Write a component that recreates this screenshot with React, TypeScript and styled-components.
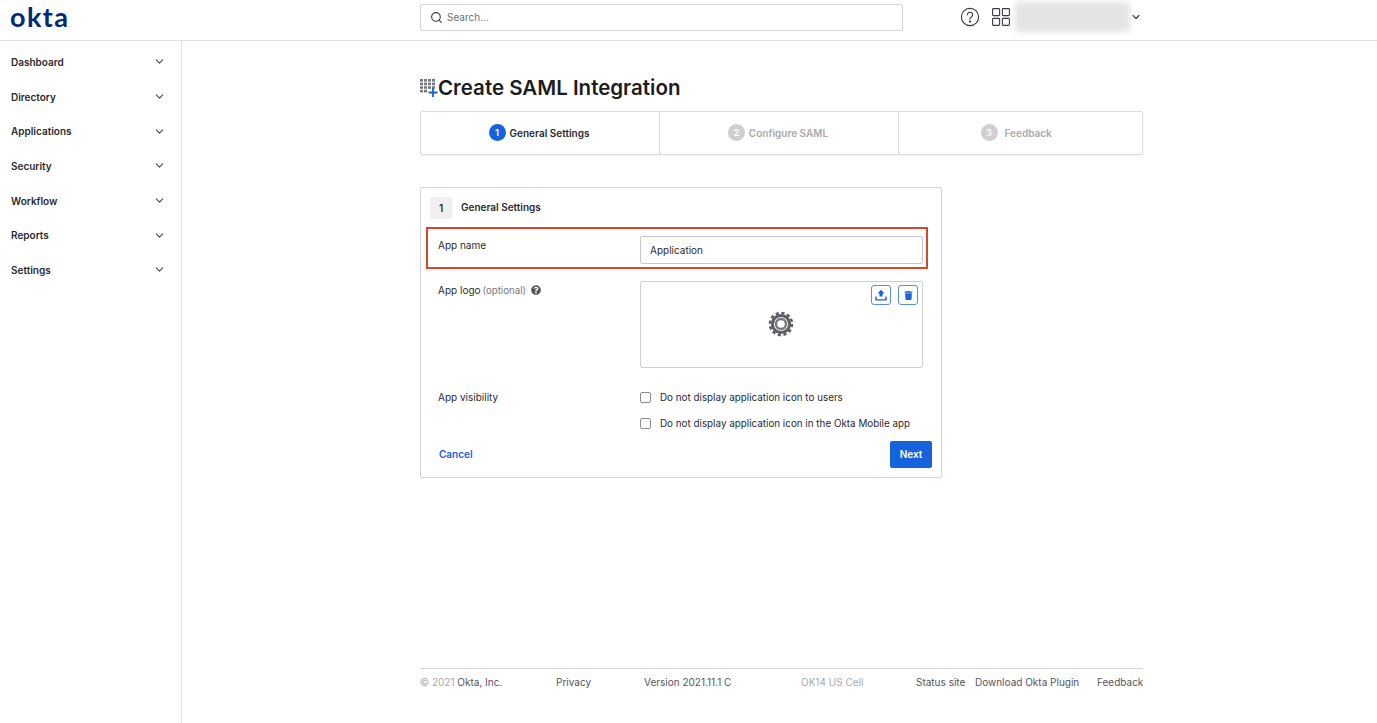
import React from 'react';
import styled, { createGlobalStyle } from 'styled-components';
import { ChevronDown, Search } from 'lucide-react';
import { FaQuestionCircle, FaTrash } from 'react-icons/fa';

const GlobalStyle = createGlobalStyle`
  html, body {
    margin: 0;
    padding: 0;
    background: #fff;
    color: #2b2b2e;
    font-family: Inter, "Liberation Sans", sans-serif;
    font-size: 10px;
  }
  * { box-sizing: border-box; }
`;

const Page = styled.div`
  width: 1377px;
  height: 723px;
  display: grid;
  grid-template-rows: 41px 1fr;
  grid-template-columns: 182px 1fr;
  overflow: hidden;
`;

const Header = styled.header`
  grid-column: 1 / 3;
  display: flex;
  align-items: center;
  padding-bottom: 6px;
  border-bottom: 1px solid #e1e1e1;
`;

const LogoCell = styled.div`
  width: 420px;
  padding-left: 10px;
`;

const Logo = styled.span`
  color: #00297a;
  font-family: Lato, sans-serif;
  font-size: 27px;
  font-weight: 700;
  letter-spacing: 1.4px;
  line-height: 36px;
`;

const SearchBox = styled.div`
  width: 483px;
  height: 27px;
  display: flex;
  align-items: center;
  gap: 4px;
  padding-left: 9px;
  border: 1px solid #d4d4d6;
  border-radius: 2px;
  color: #6e6e78;
`;

const HeaderTools = styled.div`
  display: flex;
  align-items: center;
  margin-left: 57px;
  gap: 12px;
`;

const UserBlur = styled.div`
  width: 115px;
  height: 30px;
  margin-left: -7px;
  background: #e4e4e4;
  filter: blur(3px);
`;

const UserCaret = styled.span`
  display: flex;
  margin-left: -12px;
`;

const Sidebar = styled.nav`
  border-right: 1px solid #e1e1e1;
  padding-top: 3.5px;
`;

const NavItem = styled.div`
  height: 34.7px;
  display: flex;
  align-items: center;
  justify-content: space-between;
  padding: 0 15px 0 11px;
  font-weight: 600;
  color: #2b2b2e;
`;

const Main = styled.main`
  display: flex;
  flex-direction: column;
  padding: 32px 234px 0 238px;
`;

const TitleRow = styled.div`
  display: flex;
  align-items: center;
  height: 30px;
`;

const Title = styled.h1`
  margin: 0;
  font-size: 20.5px;
  font-weight: 600;
  line-height: 30px;
  color: #1d1d21;
`;

const Wizard = styled.div`
  display: grid;
  grid-template-columns: 238px 239px 1fr;
  height: 44px;
  margin-top: 8px;
  border: 1px solid #dcdcdc;
  border-radius: 2px;
  box-shadow: 0 1px 1px rgba(0, 0, 0, 0.05);
`;

const Step = styled.div<{ $active?: boolean; $last?: boolean }>`
  display: flex;
  align-items: center;
  justify-content: center;
  gap: ${p => (p.$last ? 7 : 4)}px;
  padding: 0 ${p => (p.$last ? 9 : 2)}px 1px 0;
  font-weight: 600;
  color: ${p => (p.$active ? '#2b2b2e' : '#a9a9ae')};
  & + & {
    border-left: 1px solid #dcdcdc;
  }
`;

const StepDot = styled.span<{ $active?: boolean }>`
  width: 17px;
  height: 17px;
  border-radius: 50%;
  display: flex;
  align-items: center;
  justify-content: center;
  font-size: 9.5px;
  color: #fff;
  background: ${p => (p.$active ? '#1662dd' : '#cfcfd2')};
`;

const Card = styled.section`
  position: relative;
  width: 522px;
  height: 291px;
  margin-top: 32px;
  padding: 9px 9px 8px;
  border: 1px solid #d4d4d6;
  border-radius: 2px;
`;

const CardHead = styled.div`
  display: flex;
  align-items: center;
  gap: 9px;
  height: 22px;
  font-weight: 600;
`;

const HeadText = styled.span`
  margin-top: -2px;
`;

const StepBox = styled.span`
  width: 22px;
  height: 22px;
  display: flex;
  align-items: center;
  justify-content: center;
  background: #f0f0f1;
  border-radius: 2px;
`;

const Row = styled.div<{ $height: number }>`
  display: grid;
  grid-template-columns: 202px 283px;
  height: ${p => p.$height}px;
  padding-left: 8px;
`;

const Label = styled.div`
  display: flex;
  align-items: center;
  gap: 5px;
  height: 16px;
  color: #2b2b2e;
`;

const Muted = styled.span`
  color: #77777c;
  font-size: 9.7px;
  margin-left: -3px;
`;

const TextField = styled.div`
  height: 28px;
  display: flex;
  align-items: center;
  padding-left: 9px;
  border: 1px solid #c9c9cc;
  border-radius: 2px;
`;

const LogoBox = styled.div`
  position: relative;
  height: 87px;
  display: flex;
  align-items: center;
  justify-content: center;
  padding: 0 1px 2px 0;
  border: 1px solid #d0d0d3;
  border-radius: 2px;
`;

const LogoActions = styled.div`
  position: absolute;
  top: 3px;
  right: 4px;
  display: flex;
  gap: 7px;
`;

const IconButton = styled.span`
  width: 20px;
  height: 20px;
  display: flex;
  align-items: center;
  justify-content: center;
  border: 1px solid #5d8fdc;
  border-radius: 3px;
  color: #1662dd;
`;

const Checks = styled.div`
  display: flex;
  flex-direction: column;
  gap: 12px;
`;

const CheckRow = styled.label`
  display: flex;
  align-items: center;
  gap: 9px;
  height: 14px;
  font-size: 9.85px;
  white-space: nowrap;
`;

const CheckBox = styled.span`
  flex: 0 0 11px;
  height: 11px;
  border: 1px solid #8c8c94;
  border-radius: 2px;
`;

const CardFoot = styled.div`
  display: flex;
  align-items: center;
  justify-content: space-between;
  padding-left: 9px;
`;

const CancelLink = styled.a`
  color: #1662dd;
  font-weight: 600;
  margin-top: -2px;
`;

const NextButton = styled.button`
  width: 42px;
  height: 27px;
  border: 0;
  border-radius: 2px;
  padding: 0 0 2px;
  background: #1662dd;
  color: #fff;
  font: 600 10px Inter, sans-serif;
`;

const Highlight = styled.div`
  position: absolute;
  left: 5px;
  top: 39px;
  width: 502px;
  height: 42px;
  border: 2px solid #d9472b;
  pointer-events: none;
`;

const Footer = styled.footer`
  display: grid;
  grid-template-columns: 136px 88px 157px 115px 59px 122px auto;
  margin-top: auto;
  margin-bottom: 35px;
  padding-top: 7px;
  height: 20px;
  border-top: 1px solid #d4d4d6;
  color: #55555e;
  white-space: nowrap;
`;

const FootFaint = styled.span`
  color: #a9a9ab;
`;

const navItems = ['Dashboard', 'Directory', 'Applications', 'Security', 'Workflow', 'Reports', 'Settings'];

const AppGridPlus = () => (
  <svg width="18" height="20" viewBox="0 0 18 20">
    {[0, 1, 2, 3].map(r =>
      [0, 1, 2, 3].map(c =>
        r === 3 && c > 1 ? null : (
          <rect key={`${r}-${c}`} x={c * 4} y={r * 3.6 + 1} width="3" height="2.6" fill="#77777f" />
        ),
      ),
    )}
    <path d="M13 10v9M8.5 14.5h9" stroke="#1662dd" strokeWidth="1.8" />
  </svg>
);

const HelpIcon = () => (
  <svg width="20" height="20" viewBox="0 0 20 20" fill="none" stroke="#3a3a40" strokeWidth="1.1">
    <circle cx="10" cy="10" r="8.6" />
    <path d="M7.4 7.8a2.6 2.6 0 1 1 4 2.2c-.9.6-1.4 1-1.4 2.2" strokeLinecap="round" />
    <circle cx="10" cy="14.6" r=".6" fill="#3a3a40" />
  </svg>
);

const AppsIcon = () => (
  <svg width="18" height="18" viewBox="0 0 18 18" fill="none" stroke="#3a3a40" strokeWidth="1.1">
    <rect x=".6" y=".6" width="7" height="7" rx=".8" />
    <rect x="10.4" y=".6" width="7" height="7" rx=".8" />
    <rect x=".6" y="10.4" width="7" height="7" rx=".8" />
    <rect x="10.4" y="10.4" width="7" height="7" rx=".8" />
  </svg>
);

const GearIcon = () => (
  <svg width="26" height="26" viewBox="0 0 26 26" fill="none" stroke="#5f5f66">
    <circle cx="13" cy="13" r="11" strokeWidth="2.6" strokeDasharray="3.2 2.56" />
    <circle cx="13" cy="13" r="8.6" strokeWidth="3" />
    <circle cx="13" cy="13" r="5" strokeWidth="2.4" stroke="#77777f" />
  </svg>
);

const UploadIcon = () => (
  <svg width="12" height="12" viewBox="0 0 12 12" fill="#1662dd">
    <path d="M6 .8 9.4 4.4H7.5v3h-3v-3H2.6z" />
    <path d="M1 7.5v3.4h10V7.5" fill="none" stroke="#1662dd" strokeWidth="1.4" />
  </svg>
);

export default function App() {
  return (
    <Page>
      <GlobalStyle />
      <Header>
        <LogoCell>
          <Logo>okta</Logo>
        </LogoCell>
        <SearchBox>
          <Search size={13} color="#3a3a40" />
          Search...
        </SearchBox>
        <HeaderTools>
          <HelpIcon />
          <AppsIcon />
          <UserBlur />
          <UserCaret>
            <ChevronDown size={12} strokeWidth={2.4} color="#3a3a40" />
          </UserCaret>
        </HeaderTools>
      </Header>
      <Sidebar>
        {navItems.map(item => (
          <NavItem key={item}>
            {item}
            <ChevronDown size={13} color="#4a4a50" />
          </NavItem>
        ))}
      </Sidebar>
      <Main>
        <TitleRow>
          <AppGridPlus />
          <Title>Create SAML Integration</Title>
        </TitleRow>
        <Wizard>
          <Step $active>
            <StepDot $active>1</StepDot>
            General Settings
          </Step>
          <Step>
            <StepDot>2</StepDot>
            Configure SAML
          </Step>
          <Step $last>
            <StepDot>3</StepDot>
            Feedback
          </Step>
        </Wizard>
        <Card>
          <CardHead>
            <StepBox>1</StepBox>
            <HeadText>General Settings</HeadText>
          </CardHead>
          <Row $height={45} style={{ marginTop: 17 }}>
            <Label style={{ marginTop: 1 }}>App name</Label>
            <TextField>Application</TextField>
          </Row>
          <Row $height={116}>
            <Label style={{ marginTop: 1 }}>
              App logo <Muted>(optional)</Muted>
              <FaQuestionCircle size={10} color="#55555e" />
            </Label>
            <LogoBox>
              <GearIcon />
              <LogoActions>
                <IconButton>
                  <UploadIcon />
                </IconButton>
                <IconButton>
                  <FaTrash size={9} />
                </IconButton>
              </LogoActions>
            </LogoBox>
          </Row>
          <Row $height={51} style={{ marginTop: -7 }}>
            <Label style={{ marginTop: -1 }}>App visibility</Label>
            <Checks>
              <CheckRow>
                <CheckBox />
                Do not display application icon to users
              </CheckRow>
              <CheckRow>
                <CheckBox />
                Do not display application icon in the Okta Mobile app
              </CheckRow>
            </Checks>
          </Row>
          <CardFoot>
            <CancelLink>Cancel</CancelLink>
            <NextButton>Next</NextButton>
          </CardFoot>
          <Highlight />
        </Card>
        <Footer>
          <span>
            <FootFaint>© 2021</FootFaint> Okta, Inc.
          </span>
          <span>Privacy</span>
          <span>Version 2021.11.1 C</span>
          <FootFaint>OK14 US Cell</FootFaint>
          <span>Status site</span>
          <span>Download Okta Plugin</span>
          <span>Feedback</span>
        </Footer>
      </Main>
    </Page>
  );
}
